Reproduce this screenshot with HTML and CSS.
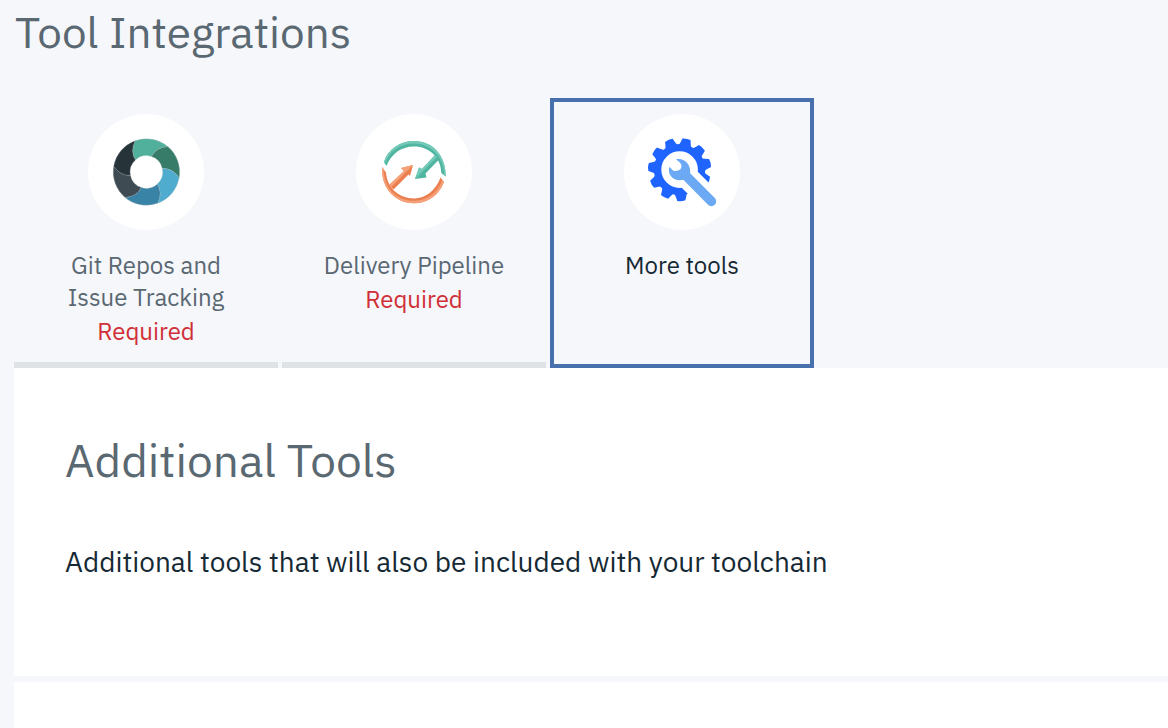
FILE: index.html
```
<!DOCTYPE html>
<html lang="en">
<head>
<meta charset="utf-8">
<title>Tool Integrations</title>
<link rel="stylesheet" href="styles.css">
</head>
<body>
<main class="page">
  <h1 class="heading page-title">Tool Integrations</h1>
  <div class="tabs" role="tablist">
    <button class="tab" type="button" role="tab" aria-selected="false">
      <svg class="tab-icon" viewBox="2 2 116 116" aria-hidden="true">
        <defs><path id="blade" d="M-11.3-31.3A33.3 33.3 0 0 1 21.5-25.4Q9.5-24.5 5-15.5A16.3 16.3 0 0 0-10.9-12.1Q-16.5-20.5-11.3-31.3Z"/></defs>
        <g transform="translate(60.4 60)" stroke="#a9bcc0" stroke-width=".3">
          <use href="#blade" fill="#50b09b"/>
          <use href="#blade" fill="#367c68" transform="rotate(60)"/>
          <use href="#blade" fill="#4faccf" transform="rotate(120)"/>
          <use href="#blade" fill="#3983a6" transform="rotate(180)"/>
          <use href="#blade" fill="#3f4b53" transform="rotate(240)"/>
          <use href="#blade" fill="#263339" transform="rotate(300)"/>
        </g>
      </svg>
      <span class="tab-name">Git Repos and<br>Issue Tracking</span>
      <span class="tab-note">Required</span>
    </button>
    <button class="tab" type="button" role="tab" aria-selected="false">
      <svg class="tab-icon" viewBox="2 2 116 116" aria-hidden="true">
        <path fill="#50b5a1" d="M30 50C34 37 46 29 60 29C79 29 92 44 91.7 64.5L87.3 61C87 45 75 34.4 60 34.4C47 34.4 37 42 32.5 54Z"/>
        <path fill="#74cab8" d="M30 50C34 37 46 29 60 29C79 29 92 44 91.7 64.5L90.3 63C90 45 77 31.5 60 31.5C46 31.5 35 39 31 52Z"/>
        <path fill="#50b5a1" d="M81 43L85.5 47L71.5 61.5L72.5 65.5L61 67L65 55.5L68 57Z"/>
        <path fill="#74cab8" d="M81 43L83 45L67.5 60.5L61 67L65 55.5L68 57Z"/>
        <path fill="#ec7f50" d="M28 55L32 60.5C33 76 45 86.4 60 86.4C72 86.4 82 78 86.5 65.5L90 70C85 83 74 91.3 60 91.3C41 91.3 27 76 28 55Z"/>
        <path fill="#f5a27b" d="M29.5 57C30 76 42 88.8 60 88.8C72 88.8 83 82 88.5 68L90 70C85 83 74 91.3 60 91.3C41 91.3 27 76 28 55Z"/>
        <path fill="#ec7f50" d="M35 73L39.5 77.5L54.5 62.5L56 64L59 53L47 56L50 59Z"/>
        <path fill="#f5a27b" d="M35 73L37.2 75L53 59L59 53L47 56L50 59Z"/>
      </svg>
      <span class="tab-name">Delivery Pipeline</span>
      <span class="tab-note">Required</span>
    </button>
    <button class="tab tab-selected" type="button" role="tab" aria-selected="true">
      <svg class="tab-icon" viewBox="2 2 116 116" aria-hidden="true">
        <defs><path id="tooth" d="M22-6.6Q25.5-6 26.7-5.3L31-4.2Q32.3 0 31.3 4L26.7 5.3Q25.5 6 22 6.6Z"/></defs>
        <g transform="translate(57.6 57.6)" fill="#1f64ff">
          <circle r="22" fill="none" stroke="#1f64ff" stroke-width="7.4"/>
          <use href="#tooth" transform="rotate(-77)"/>
          <use href="#tooth" transform="rotate(-44)"/>
          <use href="#tooth" transform="rotate(-12)"/>
          <use href="#tooth" transform="rotate(21)"/>
          <use href="#tooth" transform="rotate(87)"/>
          <use href="#tooth" transform="rotate(119)"/>
          <use href="#tooth" transform="rotate(152)"/>
          <use href="#tooth" transform="rotate(185)"/>
          <use href="#tooth" transform="rotate(217)"/>
          <use href="#tooth" transform="rotate(250)"/>
        </g>
        <path fill="#fff" d="M70 54L98 82L82 98L54 70Z"/>
        <path fill="#6ca9f4" d="M54 47.3C61 45.5 69 51 68.2 61.3L92.8 86A4.7 4.7 0 0 1 86 92.8L61.3 67.8C52 70 45 63 47.3 54.7L51.3 58.7Q55 60 58.5 57.3Q60.5 54 58.3 51Z"/>
      </svg>
      <span class="tab-name">More tools</span>
    </button>
  </div>
  <section class="panel panel-main">
    <h2 class="heading panel-title">Additional Tools</h2>
    <p class="panel-text">Additional tools that will also be included with your toolchain</p>
  </section>
  <section class="panel panel-next"></section>
</main>
</body>
</html>
```
FILE: styles.css
```
* { box-sizing: border-box; }
body {
  margin: 0;
  background: #f5f7fb;
  color: #152934;
  font-family: "IBM Plex Sans", Roboto, "Liberation Sans", sans-serif;
}
.page {
  display: flex;
  flex-direction: column;
  min-height: 100vh;
  padding-left: 14px;
}
.heading {
  margin: 0;
  color: #5a6872;
  font-size: 46px;
  font-weight: 400;
  line-height: 64px;
}
.page-title {
  margin-bottom: 34px;
  padding-left: 1px;
  font-size: 44px;
}
.tabs { display: flex; gap: 4px; }
.tab {
  display: flex;
  flex-direction: column;
  align-items: center;
  width: 264px;
  min-height: 270px;
  padding: 16px 4px 14px;
  border: 0;
  border-bottom: 6px solid #dfe3e6;
  background: transparent;
  color: #5a6872;
  font: inherit;
  font-size: 24px;
  line-height: 32px;
  cursor: pointer;
}
.tab-selected {
  padding: 12px 0;
  border: 4px solid #4870ad;
  color: #152934;
}
.tab-icon {
  width: 116px;
  height: 116px;
  flex: none;
  margin-bottom: 19px;
  border-radius: 50%;
  background: #fff;
}
.tab-note { margin-top: 2px; color: #d02f37; }
.panel { background: #fff; }
.panel-main { padding: 60px 51px 96px; }
.panel-text {
  margin: 52px 0 0;
  font-size: 28px;
  line-height: 36px;
}
.panel-next { flex: 1; margin-top: 6px; }
```
